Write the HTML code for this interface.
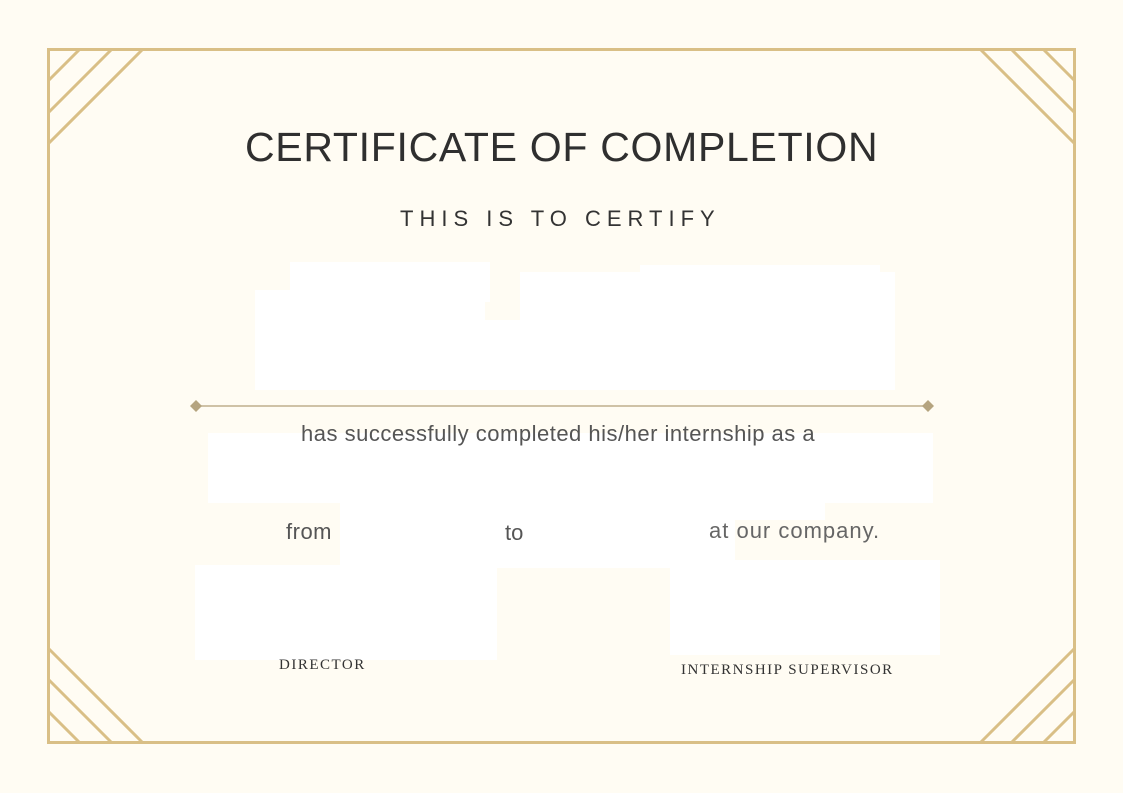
<!DOCTYPE html>
<html><head><meta charset="utf-8"><style>
html,body{margin:0;padding:0;width:1123px;height:793px;overflow:hidden;background:#fffcf3;}
.t{position:absolute;white-space:nowrap;}
</style></head><body>
<svg width="1123" height="793" style="position:absolute;left:0;top:0">
<g fill="#ffffff">
<rect x="255" y="290" width="230" height="100"/>
<rect x="290" y="262" width="200" height="40"/>
<rect x="480" y="320" width="60" height="70"/>
<rect x="520" y="272" width="375" height="118"/>
<rect x="640" y="265" width="240" height="20"/>
<rect x="208" y="433" width="725" height="70"/>
<rect x="340" y="490" width="395" height="78"/>
<rect x="735" y="490" width="90" height="30"/>
<rect x="195" y="565" width="302" height="95"/>
<rect x="670" y="560" width="270" height="95"/>
</g>
<g fill="none" stroke="#d9bf86" stroke-width="3">
<rect x="48.5" y="49.5" width="1026" height="693"/>
<line x1="80" y1="49" x2="48" y2="81"/>
<line x1="112" y1="49" x2="48" y2="113"/>
<line x1="143" y1="49" x2="48" y2="144"/>
<line x1="1043" y1="49" x2="1075" y2="81"/>
<line x1="1011" y1="49" x2="1075" y2="113"/>
<line x1="980" y1="49" x2="1075" y2="144"/>
<line x1="80" y1="743" x2="48" y2="711"/>
<line x1="112" y1="743" x2="48" y2="679"/>
<line x1="143" y1="743" x2="48" y2="648"/>
<line x1="1043" y1="743" x2="1075" y2="711"/>
<line x1="1011" y1="743" x2="1075" y2="679"/>
<line x1="980" y1="743" x2="1075" y2="648"/>
</g>
<line x1="196" y1="406" x2="928" y2="406" stroke="#bfae8c" stroke-width="1.5"/>
<polygon points="196,400 202,406 196,412 190,406" fill="#b5a47f"/>
<polygon points="928,400 934,406 928,412 922,406" fill="#b5a47f"/>
</svg>
<div class="t" style="left:245px;top:124px;font:41px 'Liberation Sans',sans-serif;color:#2f2f2f;letter-spacing:0.7px;">CERTIFICATE OF COMPLETION</div>
<div class="t" style="left:400px;top:206px;font:22px 'Liberation Sans',sans-serif;color:#333;letter-spacing:6px;">THIS IS TO CERTIFY</div>
<div class="t" style="left:301px;top:421px;font:22px 'Liberation Sans',sans-serif;color:#555;letter-spacing:0.5px;">has successfully completed his/her internship as a</div>
<div class="t" style="left:286px;top:519px;font:22px 'Liberation Sans',sans-serif;color:#555;letter-spacing:0.5px;">from</div>
<div class="t" style="left:505px;top:520px;font:22px 'Liberation Sans',sans-serif;color:#555;">to</div>
<div class="t" style="left:709px;top:518px;font:22px 'Liberation Sans',sans-serif;color:#666;letter-spacing:1px;">at our company.</div>
<div class="t" style="left:279px;top:657px;font:15px 'Liberation Serif',serif;color:#333;letter-spacing:1.5px;">DIRECTOR</div>
<div class="t" style="left:681px;top:662px;font:15px 'Liberation Serif',serif;color:#333;letter-spacing:1.5px;">INTERNSHIP SUPERVISOR</div>
</body></html>
